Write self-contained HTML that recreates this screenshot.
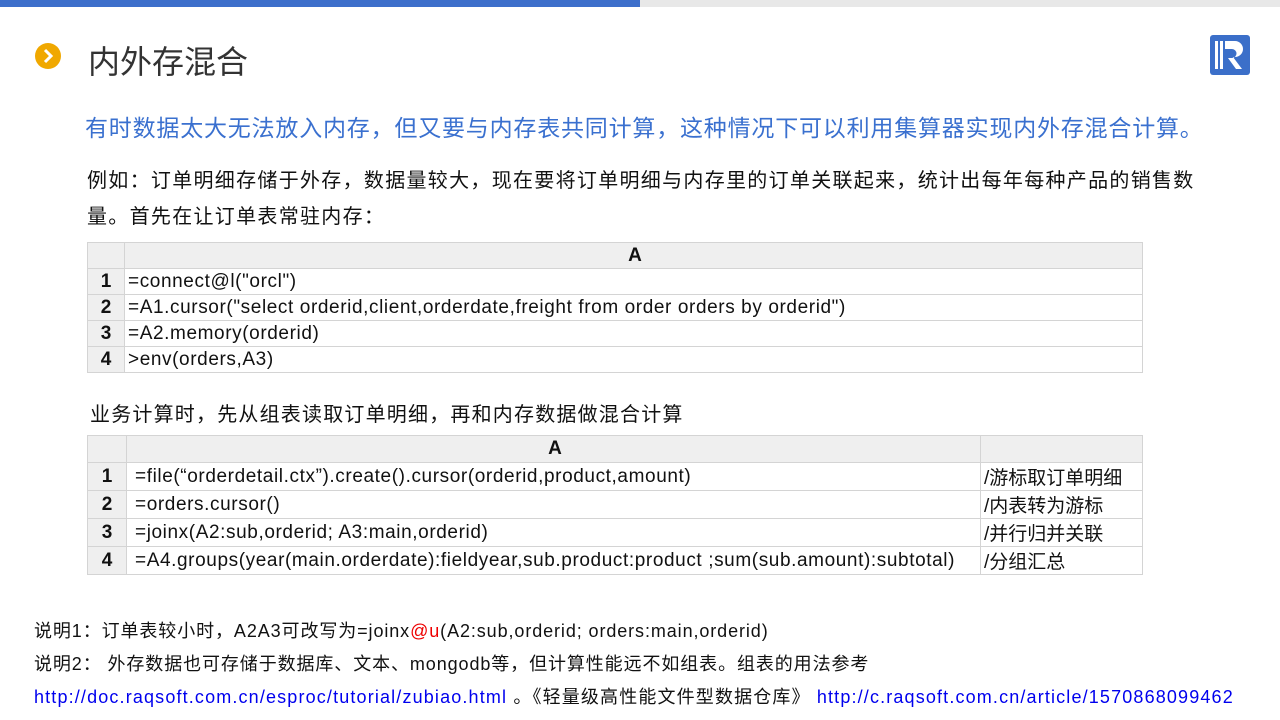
<!DOCTYPE html>
<html><head><meta charset="utf-8"><style>
*{margin:0;padding:0;box-sizing:border-box}
body{width:1280px;height:720px;background:#fff;position:relative;overflow:hidden;font-family:"Liberation Sans","Noto Sans CJK SC",sans-serif;color:#111}
.a{position:absolute;white-space:nowrap}
table{position:absolute;border-collapse:collapse;font-size:19px;table-layout:fixed}
td{border:1px solid #d4d4d4;padding:0 0 0 3px;white-space:nowrap;overflow:hidden}
td.c{letter-spacing:0.6px}
tr.h td{background:#efefef;text-align:center;font-weight:bold}
td.n{background:#efefef;text-align:center;font-weight:bold;padding:0}
a{color:#0000ee}
</style></head><body>
<div class="a" style="left:0;top:0;width:640px;height:7px;background:#3d6fcb"></div>
<div class="a" style="left:640px;top:0;width:640px;height:7px;background:#e8e8e8"></div>
<svg class="a" style="left:34px;top:42px" width="28" height="28"><circle cx="14" cy="14" r="13" fill="#f0a800"/><path d="M11 8l6 6-6 6" stroke="#fff" stroke-width="3" fill="none"/></svg>
<div class="a" style="left:88px;top:37px;font-size:32px;color:#333">内外存混合</div>
<svg class="a" style="left:1210px;top:35px" width="40" height="40"><rect width="40" height="40" rx="3" fill="#3b6fc9"/><rect x="5" y="6" width="3" height="28" fill="#fff"/><rect x="10" y="6" width="3" height="28" fill="#fff"/><path d="M15 6h10a8 8 0 0 1 0 16h-2l9 12h-6l-8-11h4a4 4 0 0 0 0-9h-7z" fill="#fff"/></svg>
<div class="a" style="left:85px;top:109px;font-size:23px;color:#3a70cf;letter-spacing:0.8px">有时数据太大无法放入内存，但又要与内存表共同计算，这种情况下可以利用集算器实现内外存混合计算。</div>
<div class="a" style="left:87px;top:163px;font-size:20px;line-height:36px;letter-spacing:1.3px">例如：订单明细存储于外存，数据量较大，现在要将订单明细与内存里的订单关联起来，统计出每年每种产品的销售数<br>量。首先在让订单表常驻内存：</div>
<table style="left:87px;top:242px;width:1056px">
<tr class="h" style="height:26px"><td style="width:37px"></td><td>A</td></tr>
<tr style="height:26px"><td class="n">1</td><td class="c">=connect@l("orcl")</td></tr>
<tr style="height:26px"><td class="n">2</td><td class="c">=A1.cursor("select orderid,client,orderdate,freight from order orders by orderid")</td></tr>
<tr style="height:26px"><td class="n">3</td><td class="c">=A2.memory(orderid)</td></tr>
<tr style="height:26px"><td class="n">4</td><td class="c">&gt;env(orders,A3)</td></tr>
</table>
<div class="a" style="left:90px;top:398px;font-size:20px;letter-spacing:1.2px">业务计算时，先从组表读取订单明细，再和内存数据做混合计算</div>
<table style="left:87px;top:435px;width:1056px">
<tr class="h" style="height:27px"><td style="width:39px"></td><td style="width:854px">A</td><td></td></tr>
<tr style="height:28px"><td class="n">1</td><td class="c" style="padding-left:8px">=file(“orderdetail.ctx”).create().cursor(orderid,product,amount)</td><td>/游标取订单明细</td></tr>
<tr style="height:28px"><td class="n">2</td><td class="c" style="padding-left:8px">=orders.cursor()</td><td>/内表转为游标</td></tr>
<tr style="height:28px"><td class="n">3</td><td class="c" style="padding-left:8px">=joinx(A2:sub,orderid; A3:main,orderid)</td><td>/并行归并关联</td></tr>
<tr style="height:28px"><td class="n">4</td><td class="c" style="padding-left:8px">=A4.groups(year(main.orderdate):fieldyear,sub.product:product ;sum(sub.amount):subtotal)</td><td>/分组汇总</td></tr>
</table>
<div class="a" style="left:34px;top:617px;font-size:18px;letter-spacing:0.9px">说明1：订单表较小时，A2A3可改写为=joinx<span style="color:#e00">@u</span>(A2:sub,orderid; orders:main,orderid)</div>
<div class="a" style="left:34px;top:650px;font-size:18px;letter-spacing:0.9px">说明2： 外存数据也可存储于数据库、文本、mongodb等，但计算性能远不如组表。组表的用法参考</div>
<div class="a" style="left:34px;top:683px;font-size:18px;letter-spacing:1.15px"><a>http://doc.raqsoft.com.cn/esproc/tutorial/zubiao.html </a>。《轻量级高性能文件型数据仓库》<a> http://c.raqsoft.com.cn/article/1570868099462</a></div>
</body></html>
